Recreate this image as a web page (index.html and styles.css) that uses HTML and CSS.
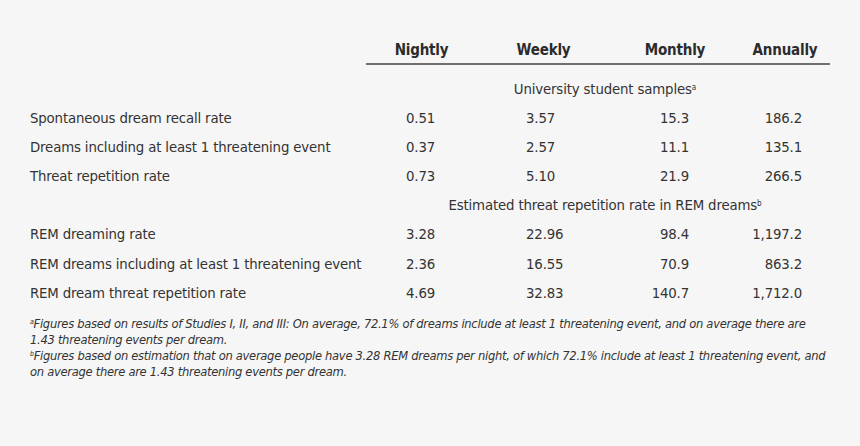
FILE: index.html
```html
<!DOCTYPE html>
<html lang="en">
<head>
<meta charset="utf-8">
<title>Threat repetition rates</title>
<link rel="stylesheet" href="styles.css">
</head>
<body>
<div class="page">
  <div class="table">
    <div class="head"></div>
    <div class="head col-h">Nightly</div>
    <div class="head col-h">Weekly</div>
    <div class="head col-h">Monthly</div>
    <div class="head col-h">Annually</div>

    <div class="rule"></div>

    <div class="label"></div>
    <div class="sub first">University student samples<sup>a</sup></div>

    <div class="label">Spontaneous dream recall rate</div>
    <div class="num n1">0.51</div><div class="num n2">3.57</div><div class="num n3">15.3</div><div class="num n4">186.2</div>

    <div class="label">Dreams including at least 1 threatening event</div>
    <div class="num n1">0.37</div><div class="num n2">2.57</div><div class="num n3">11.1</div><div class="num n4">135.1</div>

    <div class="label">Threat repetition rate</div>
    <div class="num n1">0.73</div><div class="num n2">5.10</div><div class="num n3">21.9</div><div class="num n4">266.5</div>

    <div class="label"></div>
    <div class="sub second">Estimated threat repetition rate in REM dreams<sup>b</sup></div>

    <div class="label">REM dreaming rate</div>
    <div class="num n1">3.28</div><div class="num n2">22.96</div><div class="num n3">98.4</div><div class="num n4">1,197.2</div>

    <div class="label">REM dreams including at least 1 threatening event</div>
    <div class="num n1">2.36</div><div class="num n2">16.55</div><div class="num n3">70.9</div><div class="num n4">863.2</div>

    <div class="label">REM dream threat repetition rate</div>
    <div class="num n1">4.69</div><div class="num n2">32.83</div><div class="num n3">140.7</div><div class="num n4">1,712.0</div>
  </div>

  <div class="notes">
    <p><sup>a</sup>Figures based on results of Studies I, II, and III: On average, 72.1% of dreams include at least 1 threatening event, and on average there are<br>1.43 threatening events per dream.</p>
    <p><sup>b</sup>Figures based on estimation that on average people have 3.28 REM dreams per night, of which 72.1% include at least 1 threatening event, and<br>on average there are 1.43 threatening events per dream.</p>
  </div>
</div>
</body>
</html>
```

FILE: styles.css
```css
html, body {
  margin: 0;
  padding: 0;
  background: #f6f6f6;
}

body {
  width: 860px;
  height: 446px;
  overflow: hidden;
  color: #333333;
  font-family: "DejaVu Sans Condensed", "Liberation Sans Narrow", "Open Sans", sans-serif;
  font-stretch: condensed;
}

.page {
  padding: 38px 0 0 30px;
}

.table {
  display: grid;
  grid-template-columns: 336px 111px 133px 130px 90px;
  grid-template-rows: 25px 10.5px repeat(8, 29.2px);
  font-size: 14.8px;
  letter-spacing: -0.15px;
  line-height: 29.2px;
}

.head {
  line-height: 25px;
  font-weight: bold;
  font-size: 15px;
  letter-spacing: -0.2px;
  color: #2c2c2c;
}

.col-h {
  text-align: center;
}

.rule {
  grid-column: 2 / 6;
  border-top: 2px solid #707070;
}

.sub {
  grid-column: 2 / 6;
  text-align: center;
  padding-left: 14px;
}

.sub sup,
.notes sup {
  font-size: 0.55em;
  vertical-align: 0.55em;
  line-height: 0;
}

.label,
.num {
  white-space: nowrap;
}

.n1 { padding-left: 40px; }
.n2 { padding-left: 49px; }
.n3 { text-align: right; padding-right: 51px; }
.n4 { text-align: right; padding-right: 28px; }

.notes {
  margin-top: 9px;
  font-style: italic;
  font-size: 12.8px;
  letter-spacing: -0.28px;
  line-height: 16px;
  white-space: nowrap;
}

.notes p {
  margin: 0;
}
```
